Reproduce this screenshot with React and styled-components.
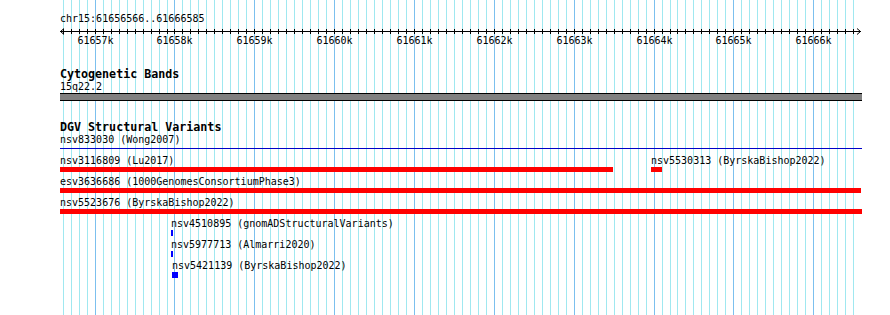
import React from "react";
import styled, { createGlobalStyle } from "styled-components";

const START = 61656566;
const END = 61666585;
const LEFT = 60;
const SCALE = 800 / (END - START + 1);

const toX = (pos) => Math.round(LEFT + (pos - START) * SCALE);

const GlobalStyle = createGlobalStyle`
  body {
    margin: 0;
    background: #ffffff;
  }
`;

const Panel = styled.div`
  position: relative;
  width: 890px;
  height: 315px;
  overflow: hidden;
  background: #ffffff;
  font-family: "DejaVu Sans Mono", "Liberation Mono", monospace;
  color: #000000;
`;

const GridLayer = styled.svg`
  position: absolute;
  top: 0;
  left: 0;
  z-index: 0;
`;

const Content = styled.div`
  position: relative;
  z-index: 1;
  display: flex;
  flex-direction: column;
  padding-left: ${LEFT}px;
`;

const PositionLabel = styled.div`
  margin-top: 12px;
  font-size: 10px;
  line-height: 13px;
  height: 13px;
  white-space: nowrap;
`;

const RulerSvg = styled.svg`
  display: block;
  margin-left: -${LEFT}px;
  overflow: visible;
`;

const TrackTitle = styled.div`
  margin-top: ${({ $gap }) => $gap}px;
  font-size: 11.67px;
  font-weight: bold;
  line-height: 13px;
  height: 13px;
  white-space: nowrap;
`;

const SmallLabel = styled.div`
  font-size: 10px;
  line-height: 11px;
  height: 11px;
  white-space: nowrap;
`;

const BandBar = styled.div`
  margin-top: 1px;
  width: 802px;
  height: 8px;
  box-sizing: border-box;
  border-top: 1px solid #000000;
  border-bottom: 1px solid #000000;
  background: #808080;
`;

const TrackRule = styled.div`
  margin-top: 3px;
  width: 802px;
  height: 1px;
  background: #0000c8;
`;

const Rows = styled.div`
  margin-top: 2px;
  display: flex;
  flex-direction: column;
`;

const Row = styled.div`
  position: relative;
  height: 21px;
  width: 802px;
`;

const Feature = styled.div`
  position: absolute;
  top: 4px;
  display: flex;
  flex-direction: column;
`;

const Glyph = styled.div`
  margin-top: 1px;
  height: ${({ $h }) => $h}px;
  background: ${({ $color }) => $color};
`;

const ruler = [];
for (let p = 61656600; p <= END; p += 100) {
  ruler.push({ x: toX(p), major: p % 1000 === 0, pos: p });
}

const rows = [
  [
    { x: 60, w: 553, label: "nsv3116809 (Lu2017)", color: "#ff0000", h: 5 },
    { x: 651, w: 11, label: "nsv5530313 (ByrskaBishop2022)", color: "#ff0000", h: 5 },
  ],
  [{ x: 60, w: 801, label: "esv3636686 (1000GenomesConsortiumPhase3)", color: "#ff0000", h: 5 }],
  [{ x: 60, w: 802, label: "nsv5523676 (ByrskaBishop2022)", color: "#ff0000", h: 5 }],
  [{ x: 171, w: 2, label: "nsv4510895 (gnomADStructuralVariants)", color: "#0000ff", h: 6 }],
  [{ x: 171, w: 2, label: "nsv5977713 (Almarri2020)", color: "#0000ff", h: 6 }],
  [{ x: 172, w: 6, label: "nsv5421139 (ByrskaBishop2022)", color: "#0000ff", h: 6 }],
];

const Grid = () => (
  <GridLayer width="890" height="315" shapeRendering="crispEdges">
    {ruler.map((t) => (
      <line
        key={t.pos}
        x1={t.x + 0.5}
        x2={t.x + 0.5}
        y1="0"
        y2="315"
        stroke={t.major ? "#7cc0ee" : "#a0e8f0"}
        strokeWidth="1"
      />
    ))}
  </GridLayer>
);

const Ruler = () => (
  <RulerSvg width="890" height="22" shapeRendering="crispEdges">
    <line x1="60" x2="861" y1="6.5" y2="6.5" stroke="#000" strokeWidth="1" />
    <polyline
      points="64,3.5 60.5,6.5 64,9.5"
      fill="none"
      stroke="#000"
      strokeWidth="1"
      shapeRendering="auto"
    />
    <polyline
      points="857,3.5 860.5,6.5 857,9.5"
      fill="none"
      stroke="#000"
      strokeWidth="1"
      shapeRendering="auto"
    />
    {ruler.map((t) => (
      <line
        key={t.pos}
        x1={t.x + 0.5}
        x2={t.x + 0.5}
        y1="4"
        y2="9"
        stroke="#000"
        strokeWidth="1"
      />
    ))}
    {ruler
      .filter((t) => t.major)
      .map((t) => (
        <text
          key={t.pos}
          x={t.x + 0.5}
          y="18.5"
          textAnchor="middle"
          fontFamily='"DejaVu Sans Mono", "Liberation Mono", monospace'
          fontSize="10"
          fill="#000"
        >
          {t.pos / 1000}k
        </text>
      ))}
  </RulerSvg>
);

export default function App() {
  return (
    <Panel>
      <GlobalStyle />
      <Grid />
      <Content>
        <PositionLabel>chr15:61656566..61666585</PositionLabel>
        <Ruler />

        <TrackTitle $gap={21}>Cytogenetic Bands</TrackTitle>
        <SmallLabel>15q22.2</SmallLabel>
        <BandBar />

        <TrackTitle $gap={20}>DGV Structural Variants</TrackTitle>
        <SmallLabel>nsv833030 (Wong2007)</SmallLabel>
        <TrackRule />
        <Rows>
          {rows.map((row, i) => (
            <Row key={i}>
              {row.map((f) => (
                <Feature key={f.label} style={{ left: f.x - LEFT, width: f.w }}>
                  <SmallLabel>{f.label}</SmallLabel>
                  <Glyph $h={f.h} $color={f.color} />
                </Feature>
              ))}
            </Row>
          ))}
        </Rows>
      </Content>
    </Panel>
  );
}
